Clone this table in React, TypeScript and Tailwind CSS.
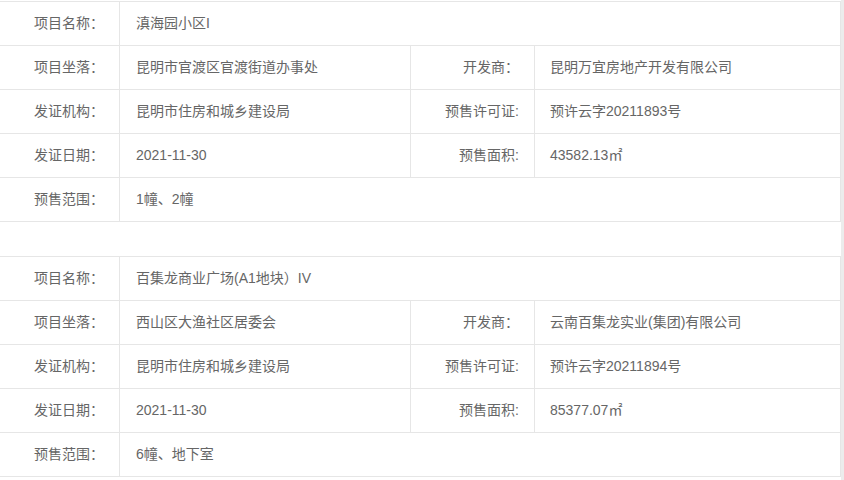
import React from 'react';

type Row = { l1: string; v1: string; l2?: string; v2?: string };

const projects: Row[][] = [
  [
    { l1: '项目名称：', v1: '滇海园小区I' },
    { l1: '项目坐落：', v1: '昆明市官渡区官渡街道办事处', l2: '开发商：', v2: '昆明万宜房地产开发有限公司' },
    { l1: '发证机构：', v1: '昆明市住房和城乡建设局', l2: '预售许可证:', v2: '预许云字20211893号' },
    { l1: '发证日期：', v1: '2021-11-30', l2: '预售面积:', v2: '43582.13㎡' },
    { l1: '预售范围：', v1: '1幢、2幢' },
  ],
  [
    { l1: '项目名称：', v1: '百集龙商业广场(A1地块）IV' },
    { l1: '项目坐落：', v1: '西山区大渔社区居委会', l2: '开发商：', v2: '云南百集龙实业(集团)有限公司' },
    { l1: '发证机构：', v1: '昆明市住房和城乡建设局', l2: '预售许可证:', v2: '预许云字20211894号' },
    { l1: '发证日期：', v1: '2021-11-30', l2: '预售面积:', v2: '85377.07㎡' },
    { l1: '预售范围：', v1: '6幢、地下室' },
  ],
];

function InfoTable({ rows }: { rows: Row[] }) {
  return (
    <div className="w-[841px] border-t border-r border-[#e6e6e6]">
      {rows.map((r, i) => (
        <div key={i} className="flex h-[44px] border-b border-[#e6e6e6]">
          <div className="w-[120px] shrink-0 border-r border-[#e6e6e6] flex items-center justify-end pr-[15px]">
            {r.l1}
          </div>
          {r.l2 ? (
            <>
              <div className="w-[291px] shrink-0 border-r border-[#e6e6e6] flex items-center pl-4">{r.v1}</div>
              <div className="w-[124px] shrink-0 border-r border-[#e6e6e6] flex items-center justify-end pr-[15px]">
                {r.l2}
              </div>
              <div className="flex-1 flex items-center pl-[15px]">{r.v2}</div>
            </>
          ) : (
            <div className="flex-1 flex items-center pl-4">{r.v1}</div>
          )}
        </div>
      ))}
    </div>
  );
}

export default function App() {
  return (
    <div
      className="flex min-h-screen bg-white text-[14px] text-[#666]"
      style={{ fontFamily: '"Liberation Sans", "Noto Sans CJK SC", sans-serif' }}
    >
      <div className="w-[841px] pt-px">
        <InfoTable rows={projects[0]} />
        <div className="h-[34px]" />
        <InfoTable rows={projects[1]} />
      </div>
      <div className="flex-1 bg-[#ececec]" />
    </div>
  );
}
